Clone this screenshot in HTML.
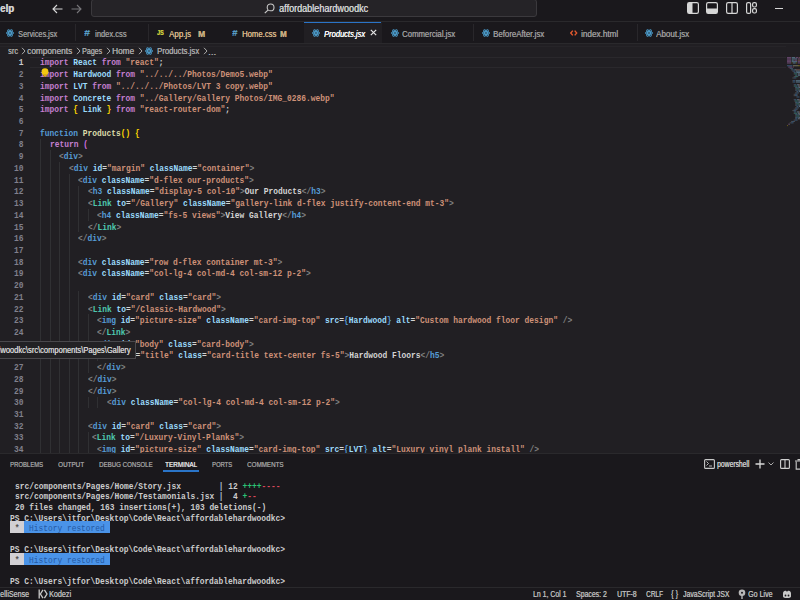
<!DOCTYPE html>
<html><head><meta charset="utf-8">
<style>
html,body{margin:0;padding:0;width:800px;height:600px;overflow:hidden;background:#211f23;}
body{position:relative;font-family:"Liberation Sans",sans-serif;}
.abs{position:absolute;}
.u{position:absolute;white-space:pre;transform-origin:0 50%;text-shadow:0.35px 0 0 currentColor;}
#title{position:absolute;left:0;top:0;width:800px;height:22px;background:#1a181c;border-bottom:1px solid #2a292c;box-sizing:border-box;}
#tabs{position:absolute;left:0;top:22px;width:800px;height:22px;background:#1a181c;border-bottom:1px solid #2a292c;box-sizing:border-box;}
#editor{position:absolute;left:0;top:44px;width:800px;height:409px;background:#211f23;overflow:hidden;}
#panel{position:absolute;left:0;top:453px;width:800px;height:134px;background:#1a181c;border-top:1px solid #2a292c;box-sizing:border-box;}
#status{position:absolute;left:0;top:587px;width:800px;height:13px;background:#1a181c;border-top:1px solid #2a292c;box-sizing:border-box;}
.ln{position:absolute;left:0;width:23.4px;transform-origin:100% 50%;font-weight:bold;text-align:right;font-family:"Liberation Mono",monospace;font-size:9.500px;line-height:11.72px;height:11.72px;color:#80808c;white-space:pre;}
.ln.cur{color:#cccccc;}
.cl{position:absolute;transform-origin:0 50%;font-weight:bold;font-family:"Liberation Mono",monospace;font-size:9.500px;line-height:11.72px;height:11.72px;white-space:pre;color:#d4d4d4;}
.ig{position:absolute;width:1px;background:#303033;}
.k{color:#c57fd0}.v{color:#9cdcfe}.s{color:#ce9178}.f{color:#569cd6}.y{color:#dcdcaa}.g{color:#ffd700}
.m{color:#d070e0}.t{color:#569cd6}.p{color:#808080}.a{color:#9cdcfe}.c{color:#4ec9b0}.w{color:#d4d4d4}.b{color:#569cd6}
.term{position:absolute;transform-origin:0 50%;font-weight:bold;font-family:"Liberation Mono",monospace;font-size:9.500px;line-height:10.64px;height:10.64px;white-space:pre;color:#cccccc;}
.hb1,.hb2{display:inline-block;height:11px;line-height:11px;vertical-align:top;position:relative;top:-1.6px}.hb1{background:#d6d6d6;color:#444}.hb2{background:#3f92ec;color:#2a64a8;font-weight:normal}
</style></head><body>
<div id="title"></div>
<div id="tabs"></div>
<div id="editor"></div>
<div class="ig" style="left:40.00px;top:138.68px;height:316.44px"></div>
<div class="ig" style="left:49.50px;top:150.40px;height:304.72px"></div>
<div class="ig" style="left:59.00px;top:162.12px;height:293.00px"></div>
<div class="ig" style="left:68.50px;top:173.84px;height:281.28px"></div>
<div class="ig" style="left:78.00px;top:185.56px;height:46.88px"></div>
<div class="ig" style="left:78.00px;top:291.04px;height:164.08px"></div>
<div class="ig" style="left:87.50px;top:209.00px;height:11.72px"></div>
<div class="ig" style="left:87.50px;top:314.48px;height:58.60px"></div>
<div class="ig" style="left:87.50px;top:396.52px;height:11.72px"></div>
<div class="ig" style="left:87.50px;top:431.68px;height:23.44px"></div>
<div class="ig" style="left:97.00px;top:349.64px;height:11.72px"></div>
<div class="ig" style="left:97.00px;top:396.52px;height:11.72px"></div>
<div class="ln cur" style="top:57.44px;transform:scaleX(0.8333)">1</div><div class="cl" style="top:57.44px;left:40.00px;transform:scaleX(0.8333)"><span class="k">import</span><span class="w"> </span><span class="v">React</span><span class="w"> </span><span class="k">from</span><span class="w"> </span><span class="s">"react"</span><span class="w">;</span></div>
<div class="ln" style="top:69.16px;transform:scaleX(0.8333)">2</div><div class="cl" style="top:69.16px;left:40.00px;transform:scaleX(0.8333)"><span class="k">import</span><span class="w"> </span><span class="v">Hardwood</span><span class="w"> </span><span class="k">from</span><span class="w"> </span><span class="s">"../../../Photos/Demo5.webp"</span></div>
<div class="ln" style="top:80.88px;transform:scaleX(0.8333)">3</div><div class="cl" style="top:80.88px;left:40.00px;transform:scaleX(0.8333)"><span class="k">import</span><span class="w"> </span><span class="v">LVT</span><span class="w"> </span><span class="k">from</span><span class="w"> </span><span class="s">"../../../Photos/LVT 3 copy.webp"</span></div>
<div class="ln" style="top:92.60px;transform:scaleX(0.8333)">4</div><div class="cl" style="top:92.60px;left:40.00px;transform:scaleX(0.8333)"><span class="k">import</span><span class="w"> </span><span class="v">Concrete</span><span class="w"> </span><span class="k">from</span><span class="w"> </span><span class="s">"../Gallery/Gallery Photos/IMG_0286.webp"</span></div>
<div class="ln" style="top:104.32px;transform:scaleX(0.8333)">5</div><div class="cl" style="top:104.32px;left:40.00px;transform:scaleX(0.8333)"><span class="k">import</span><span class="w"> </span><span class="g">{</span><span class="w"> </span><span class="v">Link</span><span class="w"> </span><span class="g">}</span><span class="w"> </span><span class="k">from</span><span class="w"> </span><span class="s">"react-router-dom"</span><span class="w">;</span></div>
<div class="ln" style="top:116.04px;transform:scaleX(0.8333)">6</div><div class="cl" style="top:116.04px;left:40.00px;transform:scaleX(0.8333)"></div>
<div class="ln" style="top:127.76px;transform:scaleX(0.8333)">7</div><div class="cl" style="top:127.76px;left:40.00px;transform:scaleX(0.8333)"><span class="f">function</span><span class="w"> </span><span class="y">Products</span><span class="g">()</span><span class="w"> </span><span class="g">{</span></div>
<div class="ln" style="top:139.48px;transform:scaleX(0.8333)">8</div><div class="cl" style="top:139.48px;left:49.50px;transform:scaleX(0.8333)"><span class="k">return</span><span class="w"> </span><span class="m">(</span></div>
<div class="ln" style="top:151.20px;transform:scaleX(0.8333)">9</div><div class="cl" style="top:151.20px;left:59.00px;transform:scaleX(0.8333)"><span class="p">&lt;</span><span class="t">div</span><span class="p">&gt;</span></div>
<div class="ln" style="top:162.92px;transform:scaleX(0.8333)">10</div><div class="cl" style="top:162.92px;left:68.50px;transform:scaleX(0.8333)"><span class="p">&lt;</span><span class="t">div</span><span class="w"> </span><span class="a">id</span><span class="w">=</span><span class="s">"margin"</span><span class="w"> </span><span class="a">className</span><span class="w">=</span><span class="s">"container"</span><span class="p">&gt;</span></div>
<div class="ln" style="top:174.64px;transform:scaleX(0.8333)">11</div><div class="cl" style="top:174.64px;left:78.00px;transform:scaleX(0.8333)"><span class="p">&lt;</span><span class="t">div</span><span class="w"> </span><span class="a">className</span><span class="w">=</span><span class="s">"d-flex our-products"</span><span class="p">&gt;</span></div>
<div class="ln" style="top:186.36px;transform:scaleX(0.8333)">12</div><div class="cl" style="top:186.36px;left:87.50px;transform:scaleX(0.8333)"><span class="p">&lt;</span><span class="t">h3</span><span class="w"> </span><span class="a">className</span><span class="w">=</span><span class="s">"display-5 col-10"</span><span class="p">&gt;</span><span class="w">Our Products</span><span class="p">&lt;/</span><span class="t">h3</span><span class="p">&gt;</span></div>
<div class="ln" style="top:198.08px;transform:scaleX(0.8333)">13</div><div class="cl" style="top:198.08px;left:87.50px;transform:scaleX(0.8333)"><span class="p">&lt;</span><span class="c">Link</span><span class="w"> </span><span class="a">to</span><span class="w">=</span><span class="s">"/Gallery"</span><span class="w"> </span><span class="a">className</span><span class="w">=</span><span class="s">"gallery-link d-flex justify-content-end mt-3"</span><span class="p">&gt;</span></div>
<div class="ln" style="top:209.80px;transform:scaleX(0.8333)">14</div><div class="cl" style="top:209.80px;left:97.00px;transform:scaleX(0.8333)"><span class="p">&lt;</span><span class="t">h4</span><span class="w"> </span><span class="a">className</span><span class="w">=</span><span class="s">"fs-5 views"</span><span class="p">&gt;</span><span class="w">View Gallery</span><span class="p">&lt;/</span><span class="t">h4</span><span class="p">&gt;</span></div>
<div class="ln" style="top:221.52px;transform:scaleX(0.8333)">15</div><div class="cl" style="top:221.52px;left:87.50px;transform:scaleX(0.8333)"><span class="p">&lt;/</span><span class="c">Link</span><span class="p">&gt;</span></div>
<div class="ln" style="top:233.24px;transform:scaleX(0.8333)">16</div><div class="cl" style="top:233.24px;left:78.00px;transform:scaleX(0.8333)"><span class="p">&lt;/</span><span class="t">div</span><span class="p">&gt;</span></div>
<div class="ln" style="top:244.96px;transform:scaleX(0.8333)">17</div><div class="cl" style="top:244.96px;left:40.00px;transform:scaleX(0.8333)"></div>
<div class="ln" style="top:256.68px;transform:scaleX(0.8333)">18</div><div class="cl" style="top:256.68px;left:78.00px;transform:scaleX(0.8333)"><span class="p">&lt;</span><span class="t">div</span><span class="w"> </span><span class="a">className</span><span class="w">=</span><span class="s">"row d-flex container mt-3"</span><span class="p">&gt;</span></div>
<div class="ln" style="top:268.40px;transform:scaleX(0.8333)">19</div><div class="cl" style="top:268.40px;left:78.00px;transform:scaleX(0.8333)"><span class="p">&lt;</span><span class="t">div</span><span class="w"> </span><span class="a">className</span><span class="w">=</span><span class="s">"col-lg-4 col-md-4 col-sm-12 p-2"</span><span class="p">&gt;</span></div>
<div class="ln" style="top:280.12px;transform:scaleX(0.8333)">20</div><div class="cl" style="top:280.12px;left:40.00px;transform:scaleX(0.8333)"></div>
<div class="ln" style="top:291.84px;transform:scaleX(0.8333)">21</div><div class="cl" style="top:291.84px;left:87.50px;transform:scaleX(0.8333)"><span class="p">&lt;</span><span class="t">div</span><span class="w"> </span><span class="a">id</span><span class="w">=</span><span class="s">"card"</span><span class="w"> </span><span class="a">class</span><span class="w">=</span><span class="s">"card"</span><span class="p">&gt;</span></div>
<div class="ln" style="top:303.56px;transform:scaleX(0.8333)">22</div><div class="cl" style="top:303.56px;left:87.50px;transform:scaleX(0.8333)"><span class="p">&lt;</span><span class="c">Link</span><span class="w"> </span><span class="a">to</span><span class="w">=</span><span class="s">"/Classic-Hardwood"</span><span class="p">&gt;</span></div>
<div class="ln" style="top:315.28px;transform:scaleX(0.8333)">23</div><div class="cl" style="top:315.28px;left:97.00px;transform:scaleX(0.8333)"><span class="p">&lt;</span><span class="t">img</span><span class="w"> </span><span class="a">id</span><span class="w">=</span><span class="s">"picture-size"</span><span class="w"> </span><span class="a">className</span><span class="w">=</span><span class="s">"card-img-top"</span><span class="w"> </span><span class="a">src</span><span class="w">=</span><span class="b">{</span><span class="v">Hardwood</span><span class="b">}</span><span class="w"> </span><span class="a">alt</span><span class="w">=</span><span class="s">"Custom hardwood floor design"</span><span class="w"> </span><span class="p">/&gt;</span></div>
<div class="ln" style="top:327.00px;transform:scaleX(0.8333)">24</div><div class="cl" style="top:327.00px;left:97.00px;transform:scaleX(0.8333)"><span class="p">&lt;/</span><span class="c">Link</span><span class="p">&gt;</span></div>
<div class="ln" style="top:338.72px;transform:scaleX(0.8333)">25</div><div class="cl" style="top:338.72px;left:97.00px;transform:scaleX(0.8333)"><span class="p">&lt;</span><span class="t">div</span><span class="w"> </span><span class="a">id</span><span class="w">=</span><span class="s">"body"</span><span class="w"> </span><span class="a">class</span><span class="w">=</span><span class="s">"card-body"</span><span class="p">&gt;</span></div>
<div class="ln" style="top:350.44px;transform:scaleX(0.8333)">26</div><div class="cl" style="top:350.44px;left:106.50px;transform:scaleX(0.8333)"><span class="p">&lt;</span><span class="t">h5</span><span class="w"> </span><span class="a">id</span><span class="w">=</span><span class="s">"title"</span><span class="w"> </span><span class="a">class</span><span class="w">=</span><span class="s">"card-title text-center fs-5"</span><span class="p">&gt;</span><span class="w">Hardwood Floors</span><span class="p">&lt;/</span><span class="t">h5</span><span class="p">&gt;</span></div>
<div class="ln" style="top:362.16px;transform:scaleX(0.8333)">27</div><div class="cl" style="top:362.16px;left:97.00px;transform:scaleX(0.8333)"><span class="p">&lt;/</span><span class="t">div</span><span class="p">&gt;</span></div>
<div class="ln" style="top:373.88px;transform:scaleX(0.8333)">28</div><div class="cl" style="top:373.88px;left:87.50px;transform:scaleX(0.8333)"><span class="p">&lt;/</span><span class="t">div</span><span class="p">&gt;</span></div>
<div class="ln" style="top:385.60px;transform:scaleX(0.8333)">29</div><div class="cl" style="top:385.60px;left:87.50px;transform:scaleX(0.8333)"><span class="p">&lt;/</span><span class="t">div</span><span class="p">&gt;</span></div>
<div class="ln" style="top:397.32px;transform:scaleX(0.8333)">30</div><div class="cl" style="top:397.32px;left:106.50px;transform:scaleX(0.8333)"><span class="p">&lt;</span><span class="t">div</span><span class="w"> </span><span class="a">className</span><span class="w">=</span><span class="s">"col-lg-4 col-md-4 col-sm-12 p-2"</span><span class="p">&gt;</span></div>
<div class="ln" style="top:409.04px;transform:scaleX(0.8333)">31</div><div class="cl" style="top:409.04px;left:40.00px;transform:scaleX(0.8333)"></div>
<div class="ln" style="top:420.76px;transform:scaleX(0.8333)">32</div><div class="cl" style="top:420.76px;left:87.50px;transform:scaleX(0.8333)"><span class="p">&lt;</span><span class="t">div</span><span class="w"> </span><span class="a">id</span><span class="w">=</span><span class="s">"card"</span><span class="w"> </span><span class="a">class</span><span class="w">=</span><span class="s">"card"</span><span class="p">&gt;</span></div>
<div class="ln" style="top:432.48px;transform:scaleX(0.8333)">33</div><div class="cl" style="top:432.48px;left:92.25px;transform:scaleX(0.8333)"><span class="p">&lt;</span><span class="c">Link</span><span class="w"> </span><span class="a">to</span><span class="w">=</span><span class="s">"/Luxury-Vinyl-Planks"</span><span class="p">&gt;</span></div>
<div class="ln" style="top:444.20px;transform:scaleX(0.8333)">34</div><div class="cl" style="top:444.20px;left:97.00px;transform:scaleX(0.8333)"><span class="p">&lt;</span><span class="t">img</span><span class="w"> </span><span class="a">id</span><span class="w">=</span><span class="s">"picture-size"</span><span class="w"> </span><span class="a">className</span><span class="w">=</span><span class="s">"card-img-top"</span><span class="w"> </span><span class="a">src</span><span class="w">=</span><span class="b">{</span><span class="v">LVT</span><span class="b">}</span><span class="w"> </span><span class="a">alt</span><span class="w">=</span><span class="s">"Luxury vinyl plank install"</span><span class="w"> </span><span class="p">/&gt;</span></div>
<div id="panel"></div>
<div class="term" style="top:481.58px;left:14.60px;transform:scaleX(0.8316)">src/components/Pages/Home/Story.jsx        <span style="color:#a9bccc">|</span> 12 <span style="color:#2bc275">++++</span><span style="color:#d9485a">----</span></div>
<div class="term" style="top:492.22px;left:14.60px;transform:scaleX(0.8316)">src/components/Pages/Home/Testamonials.jsx <span style="color:#a9bccc">|</span>  4 <span style="color:#2bc275">+</span><span style="color:#d9485a">--</span></div>
<div class="term" style="top:502.86px;left:14.60px;transform:scaleX(0.8316)">20 files changed, 163 insertions(+), 103 deletions(-)</div>
<div class="term" style="top:513.50px;left:10.00px;transform:scaleX(0.8316)">PS C:\Users\jtfor\Desktop\Code\React\affordablehardwoodkc&gt;</div>
<div class="abs" style="left:10px;top:521px;width:14.3px;height:12px;background:#d2d0d4"></div><div class="abs" style="left:24.3px;top:521px;width:85.7px;height:12px;background:#4a93e8"></div>
<div class="term" style="top:524.14px;left:10.00px;transform:scaleX(0.8316)"><span style="color:#555"> * </span><span style="color:#2559a3;font-weight:normal"> History restored </span></div>
<div class="term" style="top:545.42px;left:10.00px;transform:scaleX(0.8316)">PS C:\Users\jtfor\Desktop\Code\React\affordablehardwoodkc&gt;</div>
<div class="abs" style="left:10px;top:553px;width:14.3px;height:12px;background:#d2d0d4"></div><div class="abs" style="left:24.3px;top:553px;width:85.7px;height:12px;background:#4a93e8"></div>
<div class="term" style="top:556.06px;left:10.00px;transform:scaleX(0.8316)"><span style="color:#555"> * </span><span style="color:#2559a3;font-weight:normal"> History restored </span></div>
<div class="term" style="top:577.34px;left:10.00px;transform:scaleX(0.8316)">PS C:\Users\jtfor\Desktop\Code\React\affordablehardwoodkc&gt;</div>
<div id="status"></div>
<div class="u" style="left:0.00px;top:2.00px;line-height:14px;font-size:10px;color:#d0d0d0;transform:scaleX(0.969);font-weight:bold;">elp</div>
<svg class="abs" style="left:52px;top:4px" width="11" height="10" viewBox="0 0 11 10"><path d="M10.5 5H1.2M5 1L1 5l4 4" fill="none" stroke="#d8d8d8" stroke-width="1.1"/></svg>
<svg class="abs" style="left:71px;top:4px" width="11" height="10" viewBox="0 0 11 10"><path d="M0.5 5h9.3M6 1l4 4-4 4" fill="none" stroke="#77767a" stroke-width="1.1"/></svg>
<div class="abs" style="left:91px;top:-1px;width:446px;height:18px;border:1px solid #3b393d;border-radius:3px;background:#252327;box-sizing:border-box"></div>
<svg class="abs" style="left:264px;top:3px" width="11" height="11" viewBox="0 0 11 11"><circle cx="6.6" cy="4.4" r="3.4" fill="none" stroke="#c8c8c8" stroke-width="1.1"/><path d="M4.2 6.8L0.8 10.2" stroke="#c8c8c8" stroke-width="1.2"/></svg>
<div class="u" style="left:279.00px;top:1.60px;line-height:14px;font-size:10px;color:#cfcfcf;transform:scaleX(0.906);">affordablehardwoodkc</div>
<svg class="abs" style="left:687px;top:2.3px" width="12" height="12" viewBox="0 0 12 12"><rect x="0.6" y="0.6" width="10.8" height="10.8" rx="1.6" fill="none" stroke="#d6d6d6" stroke-width="1.2"/><rect x="1" y="1" width="4.5" height="10" fill="#d6d6d6"/></svg>
<svg class="abs" style="left:706px;top:2.3px" width="12" height="12" viewBox="0 0 12 12"><rect x="0.6" y="0.6" width="10.8" height="10.8" rx="1.6" fill="none" stroke="#d6d6d6" stroke-width="1.2"/><rect x="1" y="6.5" width="10" height="4.5" fill="#d6d6d6"/></svg>
<svg class="abs" style="left:725.5px;top:2.3px" width="12" height="12" viewBox="0 0 12 12"><rect x="0.6" y="0.6" width="10.8" height="10.8" rx="1.6" fill="none" stroke="#d6d6d6" stroke-width="1.2"/><path d="M6 1v10" stroke="#d6d6d6" stroke-width="1.2"/></svg>
<svg class="abs" style="left:745.5px;top:2.3px" width="11" height="12" viewBox="0 0 11 12"><rect x="0.6" y="0.6" width="4" height="10.8" rx="1.5" fill="none" stroke="#d6d6d6" stroke-width="1.2"/><rect x="6.6" y="0.6" width="3.8" height="4.4" rx="1.5" fill="none" stroke="#d6d6d6" stroke-width="1.2"/><rect x="6.6" y="6.6" width="3.8" height="4.4" rx="1.5" fill="none" stroke="#d6d6d6" stroke-width="1.2"/></svg>
<div class="abs" style="left:775px;top:8px;width:8px;height:1px;background:#d6d6d6"></div>
<div class="abs" style="left:304px;top:22px;width:78px;height:21px;background:#211f23"></div>
<div class="abs" style="left:304px;top:21.5px;width:77px;height:1.3px;background:#2a74c8"></div>
<div class="abs" style="left:75px;top:24px;width:1px;height:17px;background:#29272b"></div>
<div class="abs" style="left:148px;top:24px;width:1px;height:17px;background:#29272b"></div>
<div class="abs" style="left:473px;top:24px;width:1px;height:17px;background:#29272b"></div>
<div class="abs" style="left:637px;top:24px;width:1px;height:17px;background:#29272b"></div>
<svg class="abs" style="left:6px;top:29.3px" width="8" height="8" viewBox="0 0 24 24"><g fill="none" stroke="#4d9fcf" stroke-width="2.8"><ellipse cx="12" cy="12" rx="11" ry="4.2"/><ellipse cx="12" cy="12" rx="11" ry="4.2" transform="rotate(60 12 12)"/><ellipse cx="12" cy="12" rx="11" ry="4.2" transform="rotate(120 12 12)"/></g><circle cx="12" cy="12" r="2.4" fill="#4d9fcf"/></svg>
<div class="u" style="left:18.00px;top:26.60px;line-height:14px;font-size:9.5px;color:#9a9a9a;transform:scaleX(0.770);">Services.jsx</div>
<div class="u" style="left:83.80px;top:26.10px;line-height:14px;font-size:8.5px;color:#5eaad6;transform:scaleX(1.206);">#</div>
<div class="u" style="left:94.60px;top:26.60px;line-height:14px;font-size:9.5px;color:#9a9a9a;transform:scaleX(0.793);">index.css</div>
<div class="u" style="left:157.40px;top:26.00px;line-height:14px;font-size:7.5px;color:#c9c93c;transform:scaleX(0.719);font-weight:bold;">JS</div>
<div class="u" style="left:168.80px;top:26.60px;line-height:14px;font-size:9.5px;color:#d9b98a;transform:scaleX(0.829);">App.js</div>
<div class="u" style="left:198.00px;top:26.60px;line-height:14px;font-size:8.5px;color:#c9ad80;transform:scaleX(0.989);font-weight:bold;">M</div>
<div class="u" style="left:232.40px;top:26.10px;line-height:14px;font-size:8.5px;color:#5eaad6;transform:scaleX(1.100);">#</div>
<div class="u" style="left:242.40px;top:26.60px;line-height:14px;font-size:9.5px;color:#d9b98a;transform:scaleX(0.810);">Home.css</div>
<div class="u" style="left:279.60px;top:26.60px;line-height:14px;font-size:8.5px;color:#c9ad80;transform:scaleX(0.932);font-weight:bold;">M</div>
<svg class="abs" style="left:311.5px;top:29.3px" width="8" height="8" viewBox="0 0 24 24"><g fill="none" stroke="#4d9fcf" stroke-width="2.8"><ellipse cx="12" cy="12" rx="11" ry="4.2"/><ellipse cx="12" cy="12" rx="11" ry="4.2" transform="rotate(60 12 12)"/><ellipse cx="12" cy="12" rx="11" ry="4.2" transform="rotate(120 12 12)"/></g><circle cx="12" cy="12" r="2.4" fill="#4d9fcf"/></svg>
<div class="u" style="left:324.00px;top:26.60px;line-height:14px;font-size:9.5px;color:#ffffff;transform:scaleX(0.792);font-style:italic;">Products.jsx</div>
<svg class="abs" style="left:369.5px;top:29px" width="7" height="7" viewBox="0 0 7 7"><path d="M0.8 0.8l5.4 5.4M6.2 0.8L0.8 6.2" stroke="#e6e6e6" stroke-width="1.2"/></svg>
<svg class="abs" style="left:390.5px;top:29.3px" width="8" height="8" viewBox="0 0 24 24"><g fill="none" stroke="#4d9fcf" stroke-width="2.8"><ellipse cx="12" cy="12" rx="11" ry="4.2"/><ellipse cx="12" cy="12" rx="11" ry="4.2" transform="rotate(60 12 12)"/><ellipse cx="12" cy="12" rx="11" ry="4.2" transform="rotate(120 12 12)"/></g><circle cx="12" cy="12" r="2.4" fill="#4d9fcf"/></svg>
<div class="u" style="left:402.00px;top:26.60px;line-height:14px;font-size:9.5px;color:#9a9a9a;transform:scaleX(0.816);">Commercial.jsx</div>
<svg class="abs" style="left:481.5px;top:29.3px" width="8" height="8" viewBox="0 0 24 24"><g fill="none" stroke="#4d9fcf" stroke-width="2.8"><ellipse cx="12" cy="12" rx="11" ry="4.2"/><ellipse cx="12" cy="12" rx="11" ry="4.2" transform="rotate(60 12 12)"/><ellipse cx="12" cy="12" rx="11" ry="4.2" transform="rotate(120 12 12)"/></g><circle cx="12" cy="12" r="2.4" fill="#4d9fcf"/></svg>
<div class="u" style="left:493.00px;top:26.60px;line-height:14px;font-size:9.5px;color:#9a9a9a;transform:scaleX(0.826);">BeforeAfter.jsx</div>
<svg class="abs" style="left:570px;top:30px" width="7.5" height="6" viewBox="0 0 7.5 6"><path d="M2.8 0.6L0.8 3 2.8 5.4M4.7 0.6L6.7 3 4.7 5.4" fill="none" stroke="#e2592e" stroke-width="1.4"/></svg>
<div class="u" style="left:581.00px;top:26.60px;line-height:14px;font-size:9.5px;color:#9a9a9a;transform:scaleX(0.855);">index.html</div>
<svg class="abs" style="left:644.5px;top:29.3px" width="8" height="8" viewBox="0 0 24 24"><g fill="none" stroke="#4d9fcf" stroke-width="2.8"><ellipse cx="12" cy="12" rx="11" ry="4.2"/><ellipse cx="12" cy="12" rx="11" ry="4.2" transform="rotate(60 12 12)"/><ellipse cx="12" cy="12" rx="11" ry="4.2" transform="rotate(120 12 12)"/></g><circle cx="12" cy="12" r="2.4" fill="#4d9fcf"/></svg>
<div class="u" style="left:656.00px;top:26.60px;line-height:14px;font-size:9.5px;color:#9a9a9a;transform:scaleX(0.845);">About.jsx</div>
<div class="u" style="left:8.00px;top:43.80px;line-height:14px;font-size:9.5px;color:#a9a9a9;transform:scaleX(0.790);">src</div>
<svg class="abs" style="left:21px;top:47px" width="5" height="8" viewBox="0 0 5 8"><path d="M1 0.8L4 4 1 7.2" fill="none" stroke="#a9a9a9" stroke-width="1"/></svg>
<div class="u" style="left:27.00px;top:43.80px;line-height:14px;font-size:9.5px;color:#a9a9a9;transform:scaleX(0.870);">components</div>
<svg class="abs" style="left:76px;top:47px" width="5" height="8" viewBox="0 0 5 8"><path d="M1 0.8L4 4 1 7.2" fill="none" stroke="#a9a9a9" stroke-width="1"/></svg>
<div class="u" style="left:82.00px;top:43.80px;line-height:14px;font-size:9.5px;color:#a9a9a9;transform:scaleX(0.743);">Pages</div>
<svg class="abs" style="left:106px;top:47px" width="5" height="8" viewBox="0 0 5 8"><path d="M1 0.8L4 4 1 7.2" fill="none" stroke="#a9a9a9" stroke-width="1"/></svg>
<div class="u" style="left:112.00px;top:43.80px;line-height:14px;font-size:9.5px;color:#a9a9a9;transform:scaleX(0.868);">Home</div>
<svg class="abs" style="left:138px;top:47px" width="5" height="8" viewBox="0 0 5 8"><path d="M1 0.8L4 4 1 7.2" fill="none" stroke="#a9a9a9" stroke-width="1"/></svg>
<svg class="abs" style="left:145px;top:47px" width="8" height="8" viewBox="0 0 24 24"><g fill="none" stroke="#4d9fcf" stroke-width="2.8"><ellipse cx="12" cy="12" rx="11" ry="4.2"/><ellipse cx="12" cy="12" rx="11" ry="4.2" transform="rotate(60 12 12)"/><ellipse cx="12" cy="12" rx="11" ry="4.2" transform="rotate(120 12 12)"/></g><circle cx="12" cy="12" r="2.4" fill="#4d9fcf"/></svg>
<div class="u" style="left:157.00px;top:43.80px;line-height:14px;font-size:9.5px;color:#a9a9a9;transform:scaleX(0.812);">Products.jsx</div>
<svg class="abs" style="left:203px;top:47px" width="5" height="8" viewBox="0 0 5 8"><path d="M1 0.8L4 4 1 7.2" fill="none" stroke="#a9a9a9" stroke-width="1"/></svg>
<div class="u" style="left:208.00px;top:44.80px;line-height:14px;font-size:9.5px;color:#a9a9a9;transform:scaleX(1.010);">...</div>
<div class="abs" style="left:0;top:46px;width:786px;height:1px;background:#262428"></div>
<div class="abs" style="left:30px;top:56.6px;width:756px;height:11.7px;border-top:1px solid #2a282c;border-bottom:1px solid #2a282c;box-sizing:border-box"></div>
<svg class="abs" style="left:41px;top:67.5px" width="8" height="9" viewBox="0 0 8 9"><circle cx="4" cy="3.7" r="3.4" fill="#f2c811"/><rect x="2.4" y="6" width="3.2" height="2.6" rx="0.6" fill="#d9b00e"/></svg>
<div class="abs" style="left:-2px;top:341px;width:138px;height:18px;background:#222124;border:1px solid #49484c;box-sizing:border-box"></div>
<div class="abs" style="left:0;top:342px;width:135px;height:16px;overflow:hidden"><div class="u" style="left:-4.50px;top:1.00px;line-height:14px;font-size:9.5px;color:#d0d0d0;transform:scaleX(0.794);">dwoodkc\src\components\Pages\Gallery</div></div>
<svg class="abs" style="left:787px;top:57px" width="13" height="70" viewBox="0 0 13 70"><rect x="0.00" y="0.00" width="0.67" height="1.1" fill="#c57fd0" opacity="0.45"/><rect x="0.67" y="0.00" width="0.67" height="1.1" fill="#c57fd0" opacity="0.45"/><rect x="1.34" y="0.00" width="0.67" height="1.1" fill="#c57fd0" opacity="0.45"/><rect x="2.01" y="0.00" width="0.67" height="1.1" fill="#c57fd0" opacity="0.45"/><rect x="2.68" y="0.00" width="0.67" height="1.1" fill="#c57fd0" opacity="0.45"/><rect x="3.35" y="0.00" width="0.67" height="1.1" fill="#c57fd0" opacity="0.45"/><rect x="4.69" y="0.00" width="0.67" height="1.1" fill="#9cdcfe" opacity="0.45"/><rect x="5.36" y="0.00" width="0.67" height="1.1" fill="#9cdcfe" opacity="0.45"/><rect x="6.03" y="0.00" width="0.67" height="1.1" fill="#9cdcfe" opacity="0.45"/><rect x="6.70" y="0.00" width="0.67" height="1.1" fill="#9cdcfe" opacity="0.45"/><rect x="7.37" y="0.00" width="0.67" height="1.1" fill="#9cdcfe" opacity="0.45"/><rect x="8.71" y="0.00" width="0.67" height="1.1" fill="#c57fd0" opacity="0.45"/><rect x="9.38" y="0.00" width="0.67" height="1.1" fill="#c57fd0" opacity="0.45"/><rect x="10.05" y="0.00" width="0.67" height="1.1" fill="#c57fd0" opacity="0.45"/><rect x="10.72" y="0.00" width="0.67" height="1.1" fill="#c57fd0" opacity="0.45"/><rect x="12.06" y="0.00" width="0.67" height="1.1" fill="#ce9178" opacity="0.45"/><rect x="12.73" y="0.00" width="0.67" height="1.1" fill="#ce9178" opacity="0.45"/><rect x="0.00" y="1.36" width="0.67" height="1.1" fill="#c57fd0" opacity="0.45"/><rect x="0.67" y="1.36" width="0.67" height="1.1" fill="#c57fd0" opacity="0.45"/><rect x="1.34" y="1.36" width="0.67" height="1.1" fill="#c57fd0" opacity="0.45"/><rect x="2.01" y="1.36" width="0.67" height="1.1" fill="#c57fd0" opacity="0.45"/><rect x="2.68" y="1.36" width="0.67" height="1.1" fill="#c57fd0" opacity="0.45"/><rect x="3.35" y="1.36" width="0.67" height="1.1" fill="#c57fd0" opacity="0.45"/><rect x="4.69" y="1.36" width="0.67" height="1.1" fill="#9cdcfe" opacity="0.45"/><rect x="5.36" y="1.36" width="0.67" height="1.1" fill="#9cdcfe" opacity="0.45"/><rect x="6.03" y="1.36" width="0.67" height="1.1" fill="#9cdcfe" opacity="0.45"/><rect x="6.70" y="1.36" width="0.67" height="1.1" fill="#9cdcfe" opacity="0.45"/><rect x="7.37" y="1.36" width="0.67" height="1.1" fill="#9cdcfe" opacity="0.45"/><rect x="8.04" y="1.36" width="0.67" height="1.1" fill="#9cdcfe" opacity="0.45"/><rect x="8.71" y="1.36" width="0.67" height="1.1" fill="#9cdcfe" opacity="0.45"/><rect x="9.38" y="1.36" width="0.67" height="1.1" fill="#9cdcfe" opacity="0.45"/><rect x="10.72" y="1.36" width="0.67" height="1.1" fill="#c57fd0" opacity="0.45"/><rect x="11.39" y="1.36" width="0.67" height="1.1" fill="#c57fd0" opacity="0.45"/><rect x="12.06" y="1.36" width="0.67" height="1.1" fill="#c57fd0" opacity="0.45"/><rect x="12.73" y="1.36" width="0.67" height="1.1" fill="#c57fd0" opacity="0.45"/><rect x="0.00" y="2.72" width="0.67" height="1.1" fill="#c57fd0" opacity="0.45"/><rect x="0.67" y="2.72" width="0.67" height="1.1" fill="#c57fd0" opacity="0.45"/><rect x="1.34" y="2.72" width="0.67" height="1.1" fill="#c57fd0" opacity="0.45"/><rect x="2.01" y="2.72" width="0.67" height="1.1" fill="#c57fd0" opacity="0.45"/><rect x="2.68" y="2.72" width="0.67" height="1.1" fill="#c57fd0" opacity="0.45"/><rect x="3.35" y="2.72" width="0.67" height="1.1" fill="#c57fd0" opacity="0.45"/><rect x="4.69" y="2.72" width="0.67" height="1.1" fill="#9cdcfe" opacity="0.45"/><rect x="5.36" y="2.72" width="0.67" height="1.1" fill="#9cdcfe" opacity="0.45"/><rect x="6.03" y="2.72" width="0.67" height="1.1" fill="#9cdcfe" opacity="0.45"/><rect x="7.37" y="2.72" width="0.67" height="1.1" fill="#c57fd0" opacity="0.45"/><rect x="8.04" y="2.72" width="0.67" height="1.1" fill="#c57fd0" opacity="0.45"/><rect x="8.71" y="2.72" width="0.67" height="1.1" fill="#c57fd0" opacity="0.45"/><rect x="9.38" y="2.72" width="0.67" height="1.1" fill="#c57fd0" opacity="0.45"/><rect x="10.72" y="2.72" width="0.67" height="1.1" fill="#ce9178" opacity="0.45"/><rect x="11.39" y="2.72" width="0.67" height="1.1" fill="#ce9178" opacity="0.45"/><rect x="12.06" y="2.72" width="0.67" height="1.1" fill="#ce9178" opacity="0.45"/><rect x="12.73" y="2.72" width="0.67" height="1.1" fill="#ce9178" opacity="0.45"/><rect x="0.00" y="4.08" width="0.67" height="1.1" fill="#c57fd0" opacity="0.45"/><rect x="0.67" y="4.08" width="0.67" height="1.1" fill="#c57fd0" opacity="0.45"/><rect x="1.34" y="4.08" width="0.67" height="1.1" fill="#c57fd0" opacity="0.45"/><rect x="2.01" y="4.08" width="0.67" height="1.1" fill="#c57fd0" opacity="0.45"/><rect x="2.68" y="4.08" width="0.67" height="1.1" fill="#c57fd0" opacity="0.45"/><rect x="3.35" y="4.08" width="0.67" height="1.1" fill="#c57fd0" opacity="0.45"/><rect x="4.69" y="4.08" width="0.67" height="1.1" fill="#9cdcfe" opacity="0.45"/><rect x="5.36" y="4.08" width="0.67" height="1.1" fill="#9cdcfe" opacity="0.45"/><rect x="6.03" y="4.08" width="0.67" height="1.1" fill="#9cdcfe" opacity="0.45"/><rect x="6.70" y="4.08" width="0.67" height="1.1" fill="#9cdcfe" opacity="0.45"/><rect x="7.37" y="4.08" width="0.67" height="1.1" fill="#9cdcfe" opacity="0.45"/><rect x="8.04" y="4.08" width="0.67" height="1.1" fill="#9cdcfe" opacity="0.45"/><rect x="8.71" y="4.08" width="0.67" height="1.1" fill="#9cdcfe" opacity="0.45"/><rect x="9.38" y="4.08" width="0.67" height="1.1" fill="#9cdcfe" opacity="0.45"/><rect x="10.72" y="4.08" width="0.67" height="1.1" fill="#c57fd0" opacity="0.45"/><rect x="11.39" y="4.08" width="0.67" height="1.1" fill="#c57fd0" opacity="0.45"/><rect x="12.06" y="4.08" width="0.67" height="1.1" fill="#c57fd0" opacity="0.45"/><rect x="12.73" y="4.08" width="0.67" height="1.1" fill="#c57fd0" opacity="0.45"/><rect x="0.00" y="5.44" width="0.67" height="1.1" fill="#c57fd0" opacity="0.45"/><rect x="0.67" y="5.44" width="0.67" height="1.1" fill="#c57fd0" opacity="0.45"/><rect x="1.34" y="5.44" width="0.67" height="1.1" fill="#c57fd0" opacity="0.45"/><rect x="2.01" y="5.44" width="0.67" height="1.1" fill="#c57fd0" opacity="0.45"/><rect x="2.68" y="5.44" width="0.67" height="1.1" fill="#c57fd0" opacity="0.45"/><rect x="3.35" y="5.44" width="0.67" height="1.1" fill="#c57fd0" opacity="0.45"/><rect x="4.69" y="5.44" width="0.67" height="1.1" fill="#ffd700" opacity="0.45"/><rect x="6.03" y="5.44" width="0.67" height="1.1" fill="#9cdcfe" opacity="0.45"/><rect x="6.70" y="5.44" width="0.67" height="1.1" fill="#9cdcfe" opacity="0.45"/><rect x="7.37" y="5.44" width="0.67" height="1.1" fill="#9cdcfe" opacity="0.45"/><rect x="8.04" y="5.44" width="0.67" height="1.1" fill="#9cdcfe" opacity="0.45"/><rect x="9.38" y="5.44" width="0.67" height="1.1" fill="#ffd700" opacity="0.45"/><rect x="10.72" y="5.44" width="0.67" height="1.1" fill="#c57fd0" opacity="0.45"/><rect x="11.39" y="5.44" width="0.67" height="1.1" fill="#c57fd0" opacity="0.45"/><rect x="12.06" y="5.44" width="0.67" height="1.1" fill="#c57fd0" opacity="0.45"/><rect x="12.73" y="5.44" width="0.67" height="1.1" fill="#c57fd0" opacity="0.45"/><rect x="0.00" y="8.16" width="0.67" height="1.1" fill="#569cd6" opacity="0.45"/><rect x="0.67" y="8.16" width="0.67" height="1.1" fill="#569cd6" opacity="0.45"/><rect x="1.34" y="8.16" width="0.67" height="1.1" fill="#569cd6" opacity="0.45"/><rect x="2.01" y="8.16" width="0.67" height="1.1" fill="#569cd6" opacity="0.45"/><rect x="2.68" y="8.16" width="0.67" height="1.1" fill="#569cd6" opacity="0.45"/><rect x="3.35" y="8.16" width="0.67" height="1.1" fill="#569cd6" opacity="0.45"/><rect x="4.02" y="8.16" width="0.67" height="1.1" fill="#569cd6" opacity="0.45"/><rect x="4.69" y="8.16" width="0.67" height="1.1" fill="#569cd6" opacity="0.45"/><rect x="6.03" y="8.16" width="0.67" height="1.1" fill="#dcdcaa" opacity="0.45"/><rect x="6.70" y="8.16" width="0.67" height="1.1" fill="#dcdcaa" opacity="0.45"/><rect x="7.37" y="8.16" width="0.67" height="1.1" fill="#dcdcaa" opacity="0.45"/><rect x="8.04" y="8.16" width="0.67" height="1.1" fill="#dcdcaa" opacity="0.45"/><rect x="8.71" y="8.16" width="0.67" height="1.1" fill="#dcdcaa" opacity="0.45"/><rect x="9.38" y="8.16" width="0.67" height="1.1" fill="#dcdcaa" opacity="0.45"/><rect x="10.05" y="8.16" width="0.67" height="1.1" fill="#dcdcaa" opacity="0.45"/><rect x="10.72" y="8.16" width="0.67" height="1.1" fill="#dcdcaa" opacity="0.45"/><rect x="11.39" y="8.16" width="0.67" height="1.1" fill="#ffd700" opacity="0.45"/><rect x="12.06" y="8.16" width="0.67" height="1.1" fill="#ffd700" opacity="0.45"/><rect x="1.34" y="9.52" width="0.67" height="1.1" fill="#c57fd0" opacity="0.45"/><rect x="2.01" y="9.52" width="0.67" height="1.1" fill="#c57fd0" opacity="0.45"/><rect x="2.68" y="9.52" width="0.67" height="1.1" fill="#c57fd0" opacity="0.45"/><rect x="3.35" y="9.52" width="0.67" height="1.1" fill="#c57fd0" opacity="0.45"/><rect x="4.02" y="9.52" width="0.67" height="1.1" fill="#c57fd0" opacity="0.45"/><rect x="4.69" y="9.52" width="0.67" height="1.1" fill="#c57fd0" opacity="0.45"/><rect x="6.03" y="9.52" width="0.67" height="1.1" fill="#da70d6" opacity="0.45"/><rect x="2.68" y="10.88" width="0.67" height="1.1" fill="#808080" opacity="0.45"/><rect x="3.35" y="10.88" width="0.67" height="1.1" fill="#569cd6" opacity="0.45"/><rect x="4.02" y="10.88" width="0.67" height="1.1" fill="#569cd6" opacity="0.45"/><rect x="4.69" y="10.88" width="0.67" height="1.1" fill="#569cd6" opacity="0.45"/><rect x="5.36" y="10.88" width="0.67" height="1.1" fill="#808080" opacity="0.45"/><rect x="4.02" y="12.24" width="0.67" height="1.1" fill="#808080" opacity="0.45"/><rect x="4.69" y="12.24" width="0.67" height="1.1" fill="#569cd6" opacity="0.45"/><rect x="5.36" y="12.24" width="0.67" height="1.1" fill="#569cd6" opacity="0.45"/><rect x="6.03" y="12.24" width="0.67" height="1.1" fill="#569cd6" opacity="0.45"/><rect x="7.37" y="12.24" width="0.67" height="1.1" fill="#9cdcfe" opacity="0.45"/><rect x="8.04" y="12.24" width="0.67" height="1.1" fill="#9cdcfe" opacity="0.45"/><rect x="8.71" y="12.24" width="0.67" height="1.1" fill="#d4d4d4" opacity="0.45"/><rect x="9.38" y="12.24" width="0.67" height="1.1" fill="#ce9178" opacity="0.45"/><rect x="10.05" y="12.24" width="0.67" height="1.1" fill="#ce9178" opacity="0.45"/><rect x="10.72" y="12.24" width="0.67" height="1.1" fill="#ce9178" opacity="0.45"/><rect x="11.39" y="12.24" width="0.67" height="1.1" fill="#ce9178" opacity="0.45"/><rect x="12.06" y="12.24" width="0.67" height="1.1" fill="#ce9178" opacity="0.45"/><rect x="12.73" y="12.24" width="0.67" height="1.1" fill="#ce9178" opacity="0.45"/><rect x="5.36" y="13.60" width="0.67" height="1.1" fill="#808080" opacity="0.45"/><rect x="6.03" y="13.60" width="0.67" height="1.1" fill="#569cd6" opacity="0.45"/><rect x="6.70" y="13.60" width="0.67" height="1.1" fill="#569cd6" opacity="0.45"/><rect x="7.37" y="13.60" width="0.67" height="1.1" fill="#569cd6" opacity="0.45"/><rect x="8.71" y="13.60" width="0.67" height="1.1" fill="#9cdcfe" opacity="0.45"/><rect x="9.38" y="13.60" width="0.67" height="1.1" fill="#9cdcfe" opacity="0.45"/><rect x="10.05" y="13.60" width="0.67" height="1.1" fill="#9cdcfe" opacity="0.45"/><rect x="10.72" y="13.60" width="0.67" height="1.1" fill="#9cdcfe" opacity="0.45"/><rect x="11.39" y="13.60" width="0.67" height="1.1" fill="#9cdcfe" opacity="0.45"/><rect x="12.06" y="13.60" width="0.67" height="1.1" fill="#9cdcfe" opacity="0.45"/><rect x="12.73" y="13.60" width="0.67" height="1.1" fill="#9cdcfe" opacity="0.45"/><rect x="6.70" y="14.96" width="0.67" height="1.1" fill="#808080" opacity="0.45"/><rect x="7.37" y="14.96" width="0.67" height="1.1" fill="#569cd6" opacity="0.45"/><rect x="8.04" y="14.96" width="0.67" height="1.1" fill="#569cd6" opacity="0.45"/><rect x="9.38" y="14.96" width="0.67" height="1.1" fill="#9cdcfe" opacity="0.45"/><rect x="10.05" y="14.96" width="0.67" height="1.1" fill="#9cdcfe" opacity="0.45"/><rect x="10.72" y="14.96" width="0.67" height="1.1" fill="#9cdcfe" opacity="0.45"/><rect x="11.39" y="14.96" width="0.67" height="1.1" fill="#9cdcfe" opacity="0.45"/><rect x="12.06" y="14.96" width="0.67" height="1.1" fill="#9cdcfe" opacity="0.45"/><rect x="12.73" y="14.96" width="0.67" height="1.1" fill="#9cdcfe" opacity="0.45"/><rect x="6.70" y="16.32" width="0.67" height="1.1" fill="#808080" opacity="0.45"/><rect x="7.37" y="16.32" width="0.67" height="1.1" fill="#4ec9b0" opacity="0.45"/><rect x="8.04" y="16.32" width="0.67" height="1.1" fill="#4ec9b0" opacity="0.45"/><rect x="8.71" y="16.32" width="0.67" height="1.1" fill="#4ec9b0" opacity="0.45"/><rect x="9.38" y="16.32" width="0.67" height="1.1" fill="#4ec9b0" opacity="0.45"/><rect x="10.72" y="16.32" width="0.67" height="1.1" fill="#9cdcfe" opacity="0.45"/><rect x="11.39" y="16.32" width="0.67" height="1.1" fill="#9cdcfe" opacity="0.45"/><rect x="12.06" y="16.32" width="0.67" height="1.1" fill="#d4d4d4" opacity="0.45"/><rect x="12.73" y="16.32" width="0.67" height="1.1" fill="#ce9178" opacity="0.45"/><rect x="8.04" y="17.68" width="0.67" height="1.1" fill="#808080" opacity="0.45"/><rect x="8.71" y="17.68" width="0.67" height="1.1" fill="#569cd6" opacity="0.45"/><rect x="9.38" y="17.68" width="0.67" height="1.1" fill="#569cd6" opacity="0.45"/><rect x="10.72" y="17.68" width="0.67" height="1.1" fill="#9cdcfe" opacity="0.45"/><rect x="11.39" y="17.68" width="0.67" height="1.1" fill="#9cdcfe" opacity="0.45"/><rect x="12.06" y="17.68" width="0.67" height="1.1" fill="#9cdcfe" opacity="0.45"/><rect x="12.73" y="17.68" width="0.67" height="1.1" fill="#9cdcfe" opacity="0.45"/><rect x="6.70" y="19.04" width="0.67" height="1.1" fill="#808080" opacity="0.45"/><rect x="7.37" y="19.04" width="0.67" height="1.1" fill="#808080" opacity="0.45"/><rect x="8.04" y="19.04" width="0.67" height="1.1" fill="#4ec9b0" opacity="0.45"/><rect x="8.71" y="19.04" width="0.67" height="1.1" fill="#4ec9b0" opacity="0.45"/><rect x="9.38" y="19.04" width="0.67" height="1.1" fill="#4ec9b0" opacity="0.45"/><rect x="10.05" y="19.04" width="0.67" height="1.1" fill="#4ec9b0" opacity="0.45"/><rect x="10.72" y="19.04" width="0.67" height="1.1" fill="#808080" opacity="0.45"/><rect x="5.36" y="20.40" width="0.67" height="1.1" fill="#808080" opacity="0.45"/><rect x="6.03" y="20.40" width="0.67" height="1.1" fill="#808080" opacity="0.45"/><rect x="6.70" y="20.40" width="0.67" height="1.1" fill="#569cd6" opacity="0.45"/><rect x="7.37" y="20.40" width="0.67" height="1.1" fill="#569cd6" opacity="0.45"/><rect x="8.04" y="20.40" width="0.67" height="1.1" fill="#569cd6" opacity="0.45"/><rect x="8.71" y="20.40" width="0.67" height="1.1" fill="#808080" opacity="0.45"/><rect x="5.36" y="23.12" width="0.67" height="1.1" fill="#808080" opacity="0.45"/><rect x="6.03" y="23.12" width="0.67" height="1.1" fill="#569cd6" opacity="0.45"/><rect x="6.70" y="23.12" width="0.67" height="1.1" fill="#569cd6" opacity="0.45"/><rect x="7.37" y="23.12" width="0.67" height="1.1" fill="#569cd6" opacity="0.45"/><rect x="8.71" y="23.12" width="0.67" height="1.1" fill="#9cdcfe" opacity="0.45"/><rect x="9.38" y="23.12" width="0.67" height="1.1" fill="#9cdcfe" opacity="0.45"/><rect x="10.05" y="23.12" width="0.67" height="1.1" fill="#9cdcfe" opacity="0.45"/><rect x="10.72" y="23.12" width="0.67" height="1.1" fill="#9cdcfe" opacity="0.45"/><rect x="11.39" y="23.12" width="0.67" height="1.1" fill="#9cdcfe" opacity="0.45"/><rect x="12.06" y="23.12" width="0.67" height="1.1" fill="#9cdcfe" opacity="0.45"/><rect x="12.73" y="23.12" width="0.67" height="1.1" fill="#9cdcfe" opacity="0.45"/><rect x="5.36" y="24.48" width="0.67" height="1.1" fill="#808080" opacity="0.45"/><rect x="6.03" y="24.48" width="0.67" height="1.1" fill="#569cd6" opacity="0.45"/><rect x="6.70" y="24.48" width="0.67" height="1.1" fill="#569cd6" opacity="0.45"/><rect x="7.37" y="24.48" width="0.67" height="1.1" fill="#569cd6" opacity="0.45"/><rect x="8.71" y="24.48" width="0.67" height="1.1" fill="#9cdcfe" opacity="0.45"/><rect x="9.38" y="24.48" width="0.67" height="1.1" fill="#9cdcfe" opacity="0.45"/><rect x="10.05" y="24.48" width="0.67" height="1.1" fill="#9cdcfe" opacity="0.45"/><rect x="10.72" y="24.48" width="0.67" height="1.1" fill="#9cdcfe" opacity="0.45"/><rect x="11.39" y="24.48" width="0.67" height="1.1" fill="#9cdcfe" opacity="0.45"/><rect x="12.06" y="24.48" width="0.67" height="1.1" fill="#9cdcfe" opacity="0.45"/><rect x="12.73" y="24.48" width="0.67" height="1.1" fill="#9cdcfe" opacity="0.45"/><rect x="6.70" y="27.20" width="0.67" height="1.1" fill="#808080" opacity="0.45"/><rect x="7.37" y="27.20" width="0.67" height="1.1" fill="#569cd6" opacity="0.45"/><rect x="8.04" y="27.20" width="0.67" height="1.1" fill="#569cd6" opacity="0.45"/><rect x="8.71" y="27.20" width="0.67" height="1.1" fill="#569cd6" opacity="0.45"/><rect x="10.05" y="27.20" width="0.67" height="1.1" fill="#9cdcfe" opacity="0.45"/><rect x="10.72" y="27.20" width="0.67" height="1.1" fill="#9cdcfe" opacity="0.45"/><rect x="11.39" y="27.20" width="0.67" height="1.1" fill="#d4d4d4" opacity="0.45"/><rect x="12.06" y="27.20" width="0.67" height="1.1" fill="#ce9178" opacity="0.45"/><rect x="12.73" y="27.20" width="0.67" height="1.1" fill="#ce9178" opacity="0.45"/><rect x="6.70" y="28.56" width="0.67" height="1.1" fill="#808080" opacity="0.45"/><rect x="7.37" y="28.56" width="0.67" height="1.1" fill="#4ec9b0" opacity="0.45"/><rect x="8.04" y="28.56" width="0.67" height="1.1" fill="#4ec9b0" opacity="0.45"/><rect x="8.71" y="28.56" width="0.67" height="1.1" fill="#4ec9b0" opacity="0.45"/><rect x="9.38" y="28.56" width="0.67" height="1.1" fill="#4ec9b0" opacity="0.45"/><rect x="10.72" y="28.56" width="0.67" height="1.1" fill="#9cdcfe" opacity="0.45"/><rect x="11.39" y="28.56" width="0.67" height="1.1" fill="#9cdcfe" opacity="0.45"/><rect x="12.06" y="28.56" width="0.67" height="1.1" fill="#d4d4d4" opacity="0.45"/><rect x="12.73" y="28.56" width="0.67" height="1.1" fill="#ce9178" opacity="0.45"/><rect x="8.04" y="29.92" width="0.67" height="1.1" fill="#808080" opacity="0.45"/><rect x="8.71" y="29.92" width="0.67" height="1.1" fill="#569cd6" opacity="0.45"/><rect x="9.38" y="29.92" width="0.67" height="1.1" fill="#569cd6" opacity="0.45"/><rect x="10.05" y="29.92" width="0.67" height="1.1" fill="#569cd6" opacity="0.45"/><rect x="11.39" y="29.92" width="0.67" height="1.1" fill="#9cdcfe" opacity="0.45"/><rect x="12.06" y="29.92" width="0.67" height="1.1" fill="#9cdcfe" opacity="0.45"/><rect x="12.73" y="29.92" width="0.67" height="1.1" fill="#d4d4d4" opacity="0.45"/><rect x="8.04" y="31.28" width="0.67" height="1.1" fill="#808080" opacity="0.45"/><rect x="8.71" y="31.28" width="0.67" height="1.1" fill="#808080" opacity="0.45"/><rect x="9.38" y="31.28" width="0.67" height="1.1" fill="#4ec9b0" opacity="0.45"/><rect x="10.05" y="31.28" width="0.67" height="1.1" fill="#4ec9b0" opacity="0.45"/><rect x="10.72" y="31.28" width="0.67" height="1.1" fill="#4ec9b0" opacity="0.45"/><rect x="11.39" y="31.28" width="0.67" height="1.1" fill="#4ec9b0" opacity="0.45"/><rect x="12.06" y="31.28" width="0.67" height="1.1" fill="#808080" opacity="0.45"/><rect x="8.04" y="32.64" width="0.67" height="1.1" fill="#808080" opacity="0.45"/><rect x="8.71" y="32.64" width="0.67" height="1.1" fill="#569cd6" opacity="0.45"/><rect x="9.38" y="32.64" width="0.67" height="1.1" fill="#569cd6" opacity="0.45"/><rect x="10.05" y="32.64" width="0.67" height="1.1" fill="#569cd6" opacity="0.45"/><rect x="11.39" y="32.64" width="0.67" height="1.1" fill="#9cdcfe" opacity="0.45"/><rect x="12.06" y="32.64" width="0.67" height="1.1" fill="#9cdcfe" opacity="0.45"/><rect x="12.73" y="32.64" width="0.67" height="1.1" fill="#d4d4d4" opacity="0.45"/><rect x="9.38" y="34.00" width="0.67" height="1.1" fill="#808080" opacity="0.45"/><rect x="10.05" y="34.00" width="0.67" height="1.1" fill="#569cd6" opacity="0.45"/><rect x="10.72" y="34.00" width="0.67" height="1.1" fill="#569cd6" opacity="0.45"/><rect x="12.06" y="34.00" width="0.67" height="1.1" fill="#9cdcfe" opacity="0.45"/><rect x="12.73" y="34.00" width="0.67" height="1.1" fill="#9cdcfe" opacity="0.45"/><rect x="8.04" y="35.36" width="0.67" height="1.1" fill="#808080" opacity="0.45"/><rect x="8.71" y="35.36" width="0.67" height="1.1" fill="#808080" opacity="0.45"/><rect x="9.38" y="35.36" width="0.67" height="1.1" fill="#569cd6" opacity="0.45"/><rect x="10.05" y="35.36" width="0.67" height="1.1" fill="#569cd6" opacity="0.45"/><rect x="10.72" y="35.36" width="0.67" height="1.1" fill="#569cd6" opacity="0.45"/><rect x="11.39" y="35.36" width="0.67" height="1.1" fill="#808080" opacity="0.45"/><rect x="6.70" y="36.72" width="0.67" height="1.1" fill="#808080" opacity="0.45"/><rect x="7.37" y="36.72" width="0.67" height="1.1" fill="#808080" opacity="0.45"/><rect x="8.04" y="36.72" width="0.67" height="1.1" fill="#569cd6" opacity="0.45"/><rect x="8.71" y="36.72" width="0.67" height="1.1" fill="#569cd6" opacity="0.45"/><rect x="9.38" y="36.72" width="0.67" height="1.1" fill="#569cd6" opacity="0.45"/><rect x="10.05" y="36.72" width="0.67" height="1.1" fill="#808080" opacity="0.45"/><rect x="6.70" y="38.08" width="0.67" height="1.1" fill="#808080" opacity="0.45"/><rect x="7.37" y="38.08" width="0.67" height="1.1" fill="#808080" opacity="0.45"/><rect x="8.04" y="38.08" width="0.67" height="1.1" fill="#569cd6" opacity="0.45"/><rect x="8.71" y="38.08" width="0.67" height="1.1" fill="#569cd6" opacity="0.45"/><rect x="9.38" y="38.08" width="0.67" height="1.1" fill="#569cd6" opacity="0.45"/><rect x="10.05" y="38.08" width="0.67" height="1.1" fill="#808080" opacity="0.45"/><rect x="9.38" y="39.44" width="0.67" height="1.1" fill="#808080" opacity="0.45"/><rect x="10.05" y="39.44" width="0.67" height="1.1" fill="#569cd6" opacity="0.45"/><rect x="10.72" y="39.44" width="0.67" height="1.1" fill="#569cd6" opacity="0.45"/><rect x="11.39" y="39.44" width="0.67" height="1.1" fill="#569cd6" opacity="0.45"/><rect x="12.73" y="39.44" width="0.67" height="1.1" fill="#9cdcfe" opacity="0.45"/><rect x="6.70" y="42.16" width="0.67" height="1.1" fill="#808080" opacity="0.45"/><rect x="7.37" y="42.16" width="0.67" height="1.1" fill="#569cd6" opacity="0.45"/><rect x="8.04" y="42.16" width="0.67" height="1.1" fill="#569cd6" opacity="0.45"/><rect x="8.71" y="42.16" width="0.67" height="1.1" fill="#569cd6" opacity="0.45"/><rect x="10.05" y="42.16" width="0.67" height="1.1" fill="#9cdcfe" opacity="0.45"/><rect x="10.72" y="42.16" width="0.67" height="1.1" fill="#9cdcfe" opacity="0.45"/><rect x="11.39" y="42.16" width="0.67" height="1.1" fill="#d4d4d4" opacity="0.45"/><rect x="12.06" y="42.16" width="0.67" height="1.1" fill="#ce9178" opacity="0.45"/><rect x="12.73" y="42.16" width="0.67" height="1.1" fill="#ce9178" opacity="0.45"/><rect x="7.37" y="43.52" width="0.67" height="1.1" fill="#808080" opacity="0.45"/><rect x="8.04" y="43.52" width="0.67" height="1.1" fill="#4ec9b0" opacity="0.45"/><rect x="8.71" y="43.52" width="0.67" height="1.1" fill="#4ec9b0" opacity="0.45"/><rect x="9.38" y="43.52" width="0.67" height="1.1" fill="#4ec9b0" opacity="0.45"/><rect x="10.05" y="43.52" width="0.67" height="1.1" fill="#4ec9b0" opacity="0.45"/><rect x="11.39" y="43.52" width="0.67" height="1.1" fill="#9cdcfe" opacity="0.45"/><rect x="12.06" y="43.52" width="0.67" height="1.1" fill="#9cdcfe" opacity="0.45"/><rect x="12.73" y="43.52" width="0.67" height="1.1" fill="#d4d4d4" opacity="0.45"/><rect x="8.04" y="44.88" width="0.67" height="1.1" fill="#808080" opacity="0.45"/><rect x="8.71" y="44.88" width="0.67" height="1.1" fill="#569cd6" opacity="0.45"/><rect x="9.38" y="44.88" width="0.67" height="1.1" fill="#569cd6" opacity="0.45"/><rect x="10.05" y="44.88" width="0.67" height="1.1" fill="#569cd6" opacity="0.45"/><rect x="11.39" y="44.88" width="0.67" height="1.1" fill="#9cdcfe" opacity="0.45"/><rect x="12.06" y="44.88" width="0.67" height="1.1" fill="#9cdcfe" opacity="0.45"/><rect x="12.73" y="44.88" width="0.67" height="1.1" fill="#d4d4d4" opacity="0.45"/><rect x="8.04" y="46.24" width="0.67" height="1.1" fill="#808080" opacity="0.45"/><rect x="8.71" y="46.24" width="0.67" height="1.1" fill="#808080" opacity="0.45"/><rect x="9.38" y="46.24" width="0.67" height="1.1" fill="#4ec9b0" opacity="0.45"/><rect x="10.05" y="46.24" width="0.67" height="1.1" fill="#4ec9b0" opacity="0.45"/><rect x="10.72" y="46.24" width="0.67" height="1.1" fill="#4ec9b0" opacity="0.45"/><rect x="11.39" y="46.24" width="0.67" height="1.1" fill="#4ec9b0" opacity="0.45"/><rect x="12.06" y="46.24" width="0.67" height="1.1" fill="#808080" opacity="0.45"/><rect x="8.04" y="47.60" width="0.67" height="1.1" fill="#808080" opacity="0.45"/><rect x="8.71" y="47.60" width="0.67" height="1.1" fill="#569cd6" opacity="0.45"/><rect x="9.38" y="47.60" width="0.67" height="1.1" fill="#569cd6" opacity="0.45"/><rect x="10.05" y="47.60" width="0.67" height="1.1" fill="#569cd6" opacity="0.45"/><rect x="11.39" y="47.60" width="0.67" height="1.1" fill="#9cdcfe" opacity="0.45"/><rect x="12.06" y="47.60" width="0.67" height="1.1" fill="#9cdcfe" opacity="0.45"/><rect x="12.73" y="47.60" width="0.67" height="1.1" fill="#d4d4d4" opacity="0.45"/><rect x="9.38" y="48.96" width="0.67" height="1.1" fill="#808080" opacity="0.45"/><rect x="10.05" y="48.96" width="0.67" height="1.1" fill="#569cd6" opacity="0.45"/><rect x="10.72" y="48.96" width="0.67" height="1.1" fill="#569cd6" opacity="0.45"/><rect x="12.06" y="48.96" width="0.67" height="1.1" fill="#9cdcfe" opacity="0.45"/><rect x="12.73" y="48.96" width="0.67" height="1.1" fill="#9cdcfe" opacity="0.45"/><rect x="8.04" y="50.32" width="0.67" height="1.1" fill="#808080" opacity="0.45"/><rect x="8.71" y="50.32" width="0.67" height="1.1" fill="#808080" opacity="0.45"/><rect x="9.38" y="50.32" width="0.67" height="1.1" fill="#569cd6" opacity="0.45"/><rect x="10.05" y="50.32" width="0.67" height="1.1" fill="#569cd6" opacity="0.45"/><rect x="10.72" y="50.32" width="0.67" height="1.1" fill="#569cd6" opacity="0.45"/><rect x="11.39" y="50.32" width="0.67" height="1.1" fill="#808080" opacity="0.45"/><rect x="6.70" y="51.68" width="0.67" height="1.1" fill="#808080" opacity="0.45"/><rect x="7.37" y="51.68" width="0.67" height="1.1" fill="#808080" opacity="0.45"/><rect x="8.04" y="51.68" width="0.67" height="1.1" fill="#569cd6" opacity="0.45"/><rect x="8.71" y="51.68" width="0.67" height="1.1" fill="#569cd6" opacity="0.45"/><rect x="9.38" y="51.68" width="0.67" height="1.1" fill="#569cd6" opacity="0.45"/><rect x="10.05" y="51.68" width="0.67" height="1.1" fill="#808080" opacity="0.45"/><rect x="5.36" y="53.04" width="0.67" height="1.1" fill="#808080" opacity="0.45"/><rect x="6.03" y="53.04" width="0.67" height="1.1" fill="#808080" opacity="0.45"/><rect x="6.70" y="53.04" width="0.67" height="1.1" fill="#569cd6" opacity="0.45"/><rect x="7.37" y="53.04" width="0.67" height="1.1" fill="#569cd6" opacity="0.45"/><rect x="8.04" y="53.04" width="0.67" height="1.1" fill="#569cd6" opacity="0.45"/><rect x="8.71" y="53.04" width="0.67" height="1.1" fill="#808080" opacity="0.45"/><rect x="6.70" y="54.40" width="0.67" height="1.1" fill="#808080" opacity="0.45"/><rect x="7.37" y="54.40" width="0.67" height="1.1" fill="#569cd6" opacity="0.45"/><rect x="8.04" y="54.40" width="0.67" height="1.1" fill="#569cd6" opacity="0.45"/><rect x="8.71" y="54.40" width="0.67" height="1.1" fill="#569cd6" opacity="0.45"/><rect x="10.05" y="54.40" width="0.67" height="1.1" fill="#9cdcfe" opacity="0.45"/><rect x="10.72" y="54.40" width="0.67" height="1.1" fill="#9cdcfe" opacity="0.45"/><rect x="11.39" y="54.40" width="0.67" height="1.1" fill="#d4d4d4" opacity="0.45"/><rect x="12.06" y="54.40" width="0.67" height="1.1" fill="#ce9178" opacity="0.45"/><rect x="12.73" y="54.40" width="0.67" height="1.1" fill="#ce9178" opacity="0.45"/><rect x="6.70" y="55.76" width="0.67" height="1.1" fill="#808080" opacity="0.45"/><rect x="7.37" y="55.76" width="0.67" height="1.1" fill="#4ec9b0" opacity="0.45"/><rect x="8.04" y="55.76" width="0.67" height="1.1" fill="#4ec9b0" opacity="0.45"/><rect x="8.71" y="55.76" width="0.67" height="1.1" fill="#4ec9b0" opacity="0.45"/><rect x="9.38" y="55.76" width="0.67" height="1.1" fill="#4ec9b0" opacity="0.45"/><rect x="10.72" y="55.76" width="0.67" height="1.1" fill="#9cdcfe" opacity="0.45"/><rect x="11.39" y="55.76" width="0.67" height="1.1" fill="#9cdcfe" opacity="0.45"/><rect x="12.06" y="55.76" width="0.67" height="1.1" fill="#d4d4d4" opacity="0.45"/><rect x="12.73" y="55.76" width="0.67" height="1.1" fill="#ce9178" opacity="0.45"/><rect x="8.04" y="57.12" width="0.67" height="1.1" fill="#808080" opacity="0.45"/><rect x="8.71" y="57.12" width="0.67" height="1.1" fill="#569cd6" opacity="0.45"/><rect x="9.38" y="57.12" width="0.67" height="1.1" fill="#569cd6" opacity="0.45"/><rect x="10.05" y="57.12" width="0.67" height="1.1" fill="#569cd6" opacity="0.45"/><rect x="11.39" y="57.12" width="0.67" height="1.1" fill="#9cdcfe" opacity="0.45"/><rect x="12.06" y="57.12" width="0.67" height="1.1" fill="#9cdcfe" opacity="0.45"/><rect x="12.73" y="57.12" width="0.67" height="1.1" fill="#d4d4d4" opacity="0.45"/><rect x="8.04" y="58.48" width="0.67" height="1.1" fill="#808080" opacity="0.45"/><rect x="8.71" y="58.48" width="0.67" height="1.1" fill="#808080" opacity="0.45"/><rect x="9.38" y="58.48" width="0.67" height="1.1" fill="#4ec9b0" opacity="0.45"/><rect x="10.05" y="58.48" width="0.67" height="1.1" fill="#4ec9b0" opacity="0.45"/><rect x="10.72" y="58.48" width="0.67" height="1.1" fill="#4ec9b0" opacity="0.45"/><rect x="11.39" y="58.48" width="0.67" height="1.1" fill="#4ec9b0" opacity="0.45"/><rect x="12.06" y="58.48" width="0.67" height="1.1" fill="#808080" opacity="0.45"/><rect x="8.04" y="59.84" width="0.67" height="1.1" fill="#808080" opacity="0.45"/><rect x="8.71" y="59.84" width="0.67" height="1.1" fill="#569cd6" opacity="0.45"/><rect x="9.38" y="59.84" width="0.67" height="1.1" fill="#569cd6" opacity="0.45"/><rect x="10.05" y="59.84" width="0.67" height="1.1" fill="#569cd6" opacity="0.45"/><rect x="11.39" y="59.84" width="0.67" height="1.1" fill="#9cdcfe" opacity="0.45"/><rect x="12.06" y="59.84" width="0.67" height="1.1" fill="#9cdcfe" opacity="0.45"/><rect x="12.73" y="59.84" width="0.67" height="1.1" fill="#d4d4d4" opacity="0.45"/><rect x="8.04" y="61.20" width="0.67" height="1.1" fill="#808080" opacity="0.45"/><rect x="8.71" y="61.20" width="0.67" height="1.1" fill="#569cd6" opacity="0.45"/><rect x="9.38" y="61.20" width="0.67" height="1.1" fill="#569cd6" opacity="0.45"/><rect x="10.72" y="61.20" width="0.67" height="1.1" fill="#9cdcfe" opacity="0.45"/><rect x="11.39" y="61.20" width="0.67" height="1.1" fill="#9cdcfe" opacity="0.45"/><rect x="12.06" y="61.20" width="0.67" height="1.1" fill="#d4d4d4" opacity="0.45"/><rect x="12.73" y="61.20" width="0.67" height="1.1" fill="#ce9178" opacity="0.45"/><rect x="6.70" y="62.56" width="0.67" height="1.1" fill="#808080" opacity="0.45"/><rect x="7.37" y="62.56" width="0.67" height="1.1" fill="#808080" opacity="0.45"/><rect x="8.04" y="62.56" width="0.67" height="1.1" fill="#569cd6" opacity="0.45"/><rect x="8.71" y="62.56" width="0.67" height="1.1" fill="#569cd6" opacity="0.45"/><rect x="9.38" y="62.56" width="0.67" height="1.1" fill="#569cd6" opacity="0.45"/><rect x="10.05" y="62.56" width="0.67" height="1.1" fill="#808080" opacity="0.45"/><rect x="4.02" y="63.92" width="0.67" height="1.1" fill="#808080" opacity="0.45"/><rect x="4.69" y="63.92" width="0.67" height="1.1" fill="#808080" opacity="0.45"/><rect x="5.36" y="63.92" width="0.67" height="1.1" fill="#569cd6" opacity="0.45"/><rect x="6.03" y="63.92" width="0.67" height="1.1" fill="#569cd6" opacity="0.45"/><rect x="6.70" y="63.92" width="0.67" height="1.1" fill="#569cd6" opacity="0.45"/><rect x="7.37" y="63.92" width="0.67" height="1.1" fill="#808080" opacity="0.45"/><rect x="2.68" y="65.28" width="0.67" height="1.1" fill="#808080" opacity="0.45"/><rect x="3.35" y="65.28" width="0.67" height="1.1" fill="#808080" opacity="0.45"/><rect x="4.02" y="65.28" width="0.67" height="1.1" fill="#569cd6" opacity="0.45"/><rect x="4.69" y="65.28" width="0.67" height="1.1" fill="#569cd6" opacity="0.45"/><rect x="5.36" y="65.28" width="0.67" height="1.1" fill="#569cd6" opacity="0.45"/><rect x="6.03" y="65.28" width="0.67" height="1.1" fill="#808080" opacity="0.45"/><rect x="1.34" y="66.64" width="0.67" height="1.1" fill="#da70d6" opacity="0.45"/><rect x="2.01" y="66.64" width="0.67" height="1.1" fill="#d4d4d4" opacity="0.45"/><rect x="0.00" y="68.00" width="0.67" height="1.1" fill="#ffd700" opacity="0.45"/><rect x="0.00" y="70.72" width="0.67" height="1.1" fill="#c57fd0" opacity="0.45"/><rect x="0.67" y="70.72" width="0.67" height="1.1" fill="#c57fd0" opacity="0.45"/><rect x="1.34" y="70.72" width="0.67" height="1.1" fill="#c57fd0" opacity="0.45"/><rect x="2.01" y="70.72" width="0.67" height="1.1" fill="#c57fd0" opacity="0.45"/><rect x="2.68" y="70.72" width="0.67" height="1.1" fill="#c57fd0" opacity="0.45"/><rect x="3.35" y="70.72" width="0.67" height="1.1" fill="#c57fd0" opacity="0.45"/><rect x="4.69" y="70.72" width="0.67" height="1.1" fill="#c57fd0" opacity="0.45"/><rect x="5.36" y="70.72" width="0.67" height="1.1" fill="#c57fd0" opacity="0.45"/><rect x="6.03" y="70.72" width="0.67" height="1.1" fill="#c57fd0" opacity="0.45"/><rect x="6.70" y="70.72" width="0.67" height="1.1" fill="#c57fd0" opacity="0.45"/><rect x="7.37" y="70.72" width="0.67" height="1.1" fill="#c57fd0" opacity="0.45"/><rect x="8.04" y="70.72" width="0.67" height="1.1" fill="#c57fd0" opacity="0.45"/><rect x="8.71" y="70.72" width="0.67" height="1.1" fill="#c57fd0" opacity="0.45"/><rect x="10.05" y="70.72" width="0.67" height="1.1" fill="#dcdcaa" opacity="0.45"/><rect x="10.72" y="70.72" width="0.67" height="1.1" fill="#dcdcaa" opacity="0.45"/><rect x="11.39" y="70.72" width="0.67" height="1.1" fill="#dcdcaa" opacity="0.45"/><rect x="12.06" y="70.72" width="0.67" height="1.1" fill="#dcdcaa" opacity="0.45"/><rect x="12.73" y="70.72" width="0.67" height="1.1" fill="#dcdcaa" opacity="0.45"/></svg>
<div class="u" style="left:10.00px;top:457.50px;line-height:14px;font-size:7.5px;color:#9d9d9d;transform:scaleX(0.792);">PROBLEMS</div>
<div class="u" style="left:58.00px;top:457.50px;line-height:14px;font-size:7.5px;color:#9d9d9d;transform:scaleX(0.843);">OUTPUT</div>
<div class="u" style="left:98.50px;top:457.50px;line-height:14px;font-size:7.5px;color:#9d9d9d;transform:scaleX(0.818);">DEBUG CONSOLE</div>
<div class="u" style="left:165.00px;top:457.50px;line-height:14px;font-size:7.5px;color:#e0e0e0;transform:scaleX(0.844);">TERMINAL</div>
<div class="abs" style="left:163px;top:470px;width:36px;height:1.5px;background:#2a74c8"></div>
<div class="u" style="left:212.00px;top:457.50px;line-height:14px;font-size:7.5px;color:#9d9d9d;transform:scaleX(0.778);">PORTS</div>
<div class="u" style="left:247.00px;top:457.50px;line-height:14px;font-size:7.5px;color:#9d9d9d;transform:scaleX(0.834);">COMMENTS</div>
<svg class="abs" style="left:704px;top:459px" width="11" height="10" viewBox="0 0 11 10"><rect x="0.6" y="0.6" width="9.8" height="8.8" rx="1" fill="none" stroke="#c8c8c8" stroke-width="1.1"/><path d="M2.5 2.5l2 2-2 2M5 7h3" fill="none" stroke="#c8c8c8" stroke-width="0.9"/></svg>
<div class="u" style="left:716.70px;top:457.00px;line-height:14px;font-size:8.5px;color:#cccccc;transform:scaleX(0.795);">powershell</div>
<svg class="abs" style="left:755px;top:459px" width="10" height="10" viewBox="0 0 10 10"><path d="M5 0.5v9M0.5 5h9" stroke="#d8d8d8" stroke-width="1.3"/></svg>
<svg class="abs" style="left:767.5px;top:462px" width="6" height="4" viewBox="0 0 6 4"><path d="M0.5 0.5L3 3 5.5 0.5" fill="none" stroke="#bbb" stroke-width="0.9"/></svg>
<svg class="abs" style="left:780px;top:459px" width="10" height="10" viewBox="0 0 10 10"><rect x="0.6" y="0.6" width="8.8" height="8.8" rx="1" fill="none" stroke="#d0d0d0" stroke-width="1.1"/><path d="M5 1v8" stroke="#d0d0d0" stroke-width="1.1"/></svg>
<svg class="abs" style="left:794.5px;top:458.5px" width="6" height="11" viewBox="0 0 6 11"><path d="M0 2h6M2.5 0.6h3.5" fill="none" stroke="#c8c8c8" stroke-width="1.1"/><path d="M1.2 2.5v7.6h4.8" fill="none" stroke="#c8c8c8" stroke-width="1.1"/></svg>
<div class="u" style="left:0.00px;top:586.80px;line-height:14px;font-size:8.5px;color:#b8b8b8;transform:scaleX(0.841);">elliSense</div>
<svg class="abs" style="left:38px;top:588.5px" width="10" height="10" viewBox="0 0 10 10"><path d="M1.2 0.5v9M5 0.8L2.4 5 5 9.2M6.4 0.8L9 5 6.4 9.2" fill="none" stroke="#c8c8c8" stroke-width="1.3"/></svg>
<div class="u" style="left:49.00px;top:586.80px;line-height:14px;font-size:8.5px;color:#b8b8b8;transform:scaleX(0.847);">Kodezi</div>
<div class="u" style="left:532.80px;top:586.80px;line-height:14px;font-size:8.5px;color:#b8b8b8;transform:scaleX(0.808);">Ln 1, Col 1</div>
<div class="u" style="left:576.00px;top:586.80px;line-height:14px;font-size:8.5px;color:#b8b8b8;transform:scaleX(0.812);">Spaces: 2</div>
<div class="u" style="left:616.60px;top:586.80px;line-height:14px;font-size:8.5px;color:#b8b8b8;transform:scaleX(0.806);">UTF-8</div>
<div class="u" style="left:645.70px;top:586.80px;line-height:14px;font-size:8.5px;color:#b8b8b8;transform:scaleX(0.761);">CRLF</div>
<div class="u" style="left:671.40px;top:586.80px;line-height:14px;font-size:8.5px;color:#b8b8b8;transform:scaleX(0.871);">{ }</div>
<div class="u" style="left:682.80px;top:586.80px;line-height:14px;font-size:8.5px;color:#b8b8b8;transform:scaleX(0.802);">JavaScript JSX</div>
<svg class="abs" style="left:737.5px;top:588.5px" width="8" height="10" viewBox="0 0 8 10"><circle cx="4" cy="3.8" r="3.3" fill="#b8b8b8"/><path d="M4 5v5" stroke="#b8b8b8" stroke-width="1.4"/><circle cx="4" cy="3.8" r="1" fill="#1a181c"/></svg>
<div class="u" style="left:747.60px;top:586.80px;line-height:14px;font-size:8.5px;color:#b8b8b8;transform:scaleX(0.833);">Go Live</div>
<svg class="abs" style="left:781.5px;top:588.5px" width="10" height="10" viewBox="0 0 10 10"><path d="M1 4.5C1 1 4.5 1 5 3C5.5 1 9 1 9 4.5V7.5C9 9.5 1 9.5 1 7.5Z" fill="#c8c8c8"/><circle cx="3.5" cy="6.5" r="0.9" fill="#1a181c"/><circle cx="6.5" cy="6.5" r="0.9" fill="#1a181c"/></svg>
</body></html>
